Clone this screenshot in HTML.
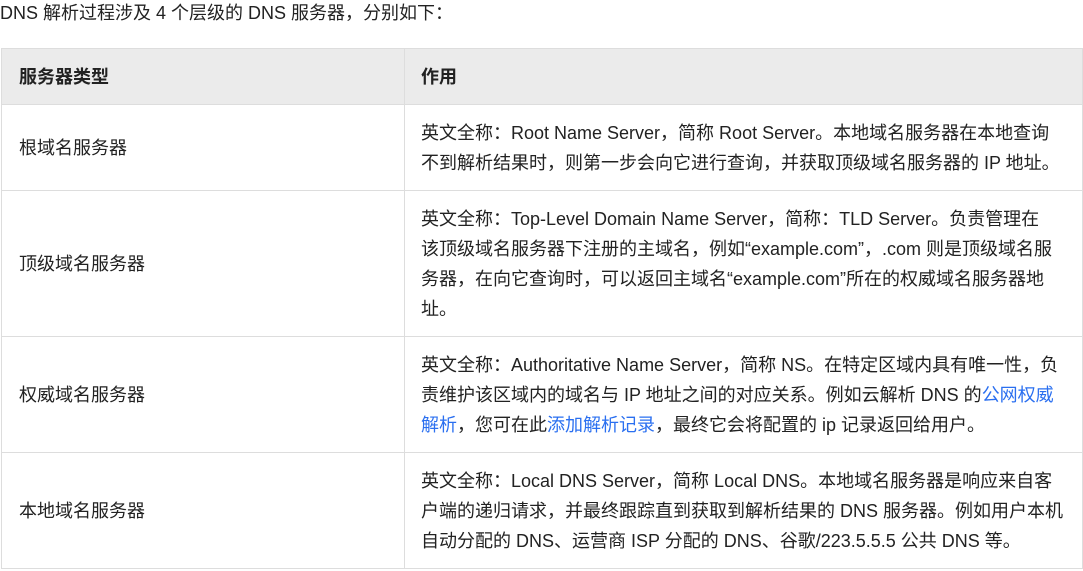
<!DOCTYPE html>
<html><head><meta charset="utf-8"><style>
html,body{margin:0;padding:0;background:#fff;}
body{width:1083px;height:571px;overflow:hidden;font-family:"Liberation Sans","Noto Sans CJK SC",sans-serif;font-size:18px;color:#222;}
.intro{position:absolute;left:0;top:1px;line-height:24px;white-space:nowrap;}
table{position:absolute;left:1px;top:48px;border-collapse:collapse;table-layout:fixed;width:1081px;}
td,th{border:1px solid #ddd;line-height:30px;padding:12px 16px 12px 16px;text-align:left;vertical-align:middle;white-space:nowrap;}
th{background:#ebebeb;font-weight:bold;color:#222;}
td:first-child,th:first-child{padding-left:17px;}
a{color:#2a6ff0;text-decoration:none;}
</style></head><body>
<div class="intro">DNS 解析过程涉及 4 个层级的 DNS 服务器，分别如下：</div>
<table>
<colgroup><col style="width:403px"><col style="width:678px"></colgroup>
<tr style="height:56px"><th>服务器类型</th><th>作用</th></tr>
<tr style="height:86px"><td>根域名服务器</td><td>英文全称：Root Name Server，简称 Root Server。本地域名服务器在本地查询<br>不到解析结果时，则第一步会向它进行查询，并获取顶级域名服务器的 IP 地址。</td></tr>
<tr style="height:146px"><td>顶级域名服务器</td><td>英文全称：Top-Level Domain Name Server，简称：TLD Server。负责管理在<br>该顶级域名服务器下注册的主域名，例如“example.com”，.com 则是顶级域名服<br>务器，在向它查询时，可以返回主域名“example.com”所在的权威域名服务器地<br>址。</td></tr>
<tr style="height:116px"><td>权威域名服务器</td><td>英文全称：Authoritative Name Server，简称 NS。在特定区域内具有唯一性，负<br>责维护该区域内的域名与 IP 地址之间的对应关系。例如云解析 DNS 的<a>公网权威</a><br><a>解析</a>，您可在此<a>添加解析记录</a>，最终它会将配置的 ip 记录返回给用户。</td></tr>
<tr style="height:116px"><td>本地域名服务器</td><td>英文全称：Local DNS Server，简称 Local DNS。本地域名服务器是响应来自客<br>户端的递归请求，并最终跟踪直到获取到解析结果的 DNS 服务器。例如用户本机<br>自动分配的 DNS、运营商 ISP 分配的 DNS、谷歌/223.5.5.5 公共 DNS 等。</td></tr>
</table>
</body></html>
